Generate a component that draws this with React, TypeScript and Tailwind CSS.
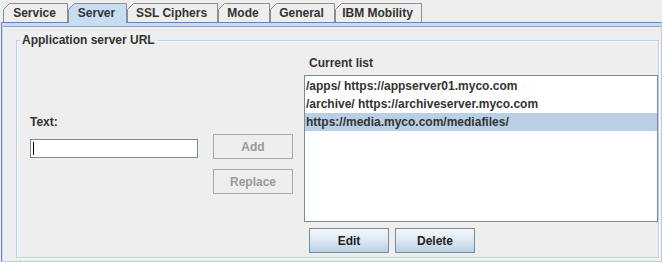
import React from "react";

type Tab = { label: string; w: number };

const TABS: Tab[] = [
  { label: "Service", w: 65 },
  { label: "Server", w: 59 },
  { label: "SSL Ciphers", w: 91 },
  { label: "Mode", w: 52 },
  { label: "General", w: 65 },
  { label: "IBM Mobility", w: 87 },
];

const SELECTED = "Server";

const ROWS = [
  { text: "/apps/ https://appserver01.myco.com", selected: false },
  { text: "/archive/ https://archiveserver.myco.com", selected: false },
  { text: "https://media.myco.com/mediafiles/", selected: true },
];

/** Metal-style tab with the clipped top-left corner. */
function TabItem({ tab }: { tab: Tab }) {
  const sel = tab.label === SELECTED;
  const h = sel ? 20 : 19;
  const w = tab.w;
  return (
    <div
      className={
        "relative flex flex-none items-start justify-center pr-[2px] pt-[3px] " +
        (sel ? "z-10 -mb-px h-[20px]" : "h-[19px]")
      }
      style={{ width: w }}
    >
      <svg className="absolute inset-0" width={w} height={h}>
        <path
          d={`M0 ${h} V6.5 L6.5 0 H${w} V${h} Z`}
          fill={sel ? "#c8ddf2" : "#eeeeee"}
        />
        <path
          d={`M0.5 ${h} V6.5 L6.5 0.5 H${w - 0.5} V${h}`}
          fill="none"
          stroke="#8a8f96"
        />
      </svg>
      <span className="relative leading-[14px]">{tab.label}</span>
    </div>
  );
}

function DisabledButton({ label }: { label: string }) {
  return (
    <div className="flex h-[25px] w-[80px] items-center justify-center border border-[#a8a8a8] bg-[#eeeeee] text-[#9a9a9a]">
      {label}
    </div>
  );
}

function OceanButton({ label }: { label: string }) {
  return (
    <div className="flex h-[25px] w-[80px] items-center justify-center border border-[#7a8a99] bg-gradient-to-b from-[#f6f9fc] via-[#dde8f3] to-[#b8cfe5] text-[#222]">
      {label}
    </div>
  );
}

export default function App() {
  return (
    <div className="h-[262px] w-[662px] overflow-hidden bg-[#eeeeee] font-['Liberation_Sans',Arial,sans-serif] text-[12px] font-bold text-[#333333]">
      {/* tab strip */}
      <div className="flex h-[22px] items-end pl-[3px]">
        {TABS.map((t) => (
          <TabItem key={t.label} tab={t} />
        ))}
      </div>

      {/* content area */}
      <div className="ml-px h-[240px] border-b border-l border-r border-t border-b-[#b8cfe5] border-l-[#6382bf] border-r-[#b8cfe5] border-t-[#6382bf]">
        <div className="h-full border-l border-t-[3px] border-[#c8ddf2]">
          <div className="h-full border-t border-[#8da2c9] pl-[13px] pt-[6px]">
            <fieldset className="h-[225px] w-[643px] border border-[#b8cfe5] shadow-[inset_1px_1px_0_#ffffff,1px_1px_0_#ffffff]">
              <legend className="ml-[3px] bg-[#eeeeee] px-[2px] leading-[14px]">
                Application server URL
              </legend>

              <div className="flex">
                {/* left column */}
                <div className="w-[287px] pl-[13px] pt-[68px]">
                  <div className="leading-[14px]">Text:</div>
                  <div className="mt-[5px] flex items-start">
                    <div className="mt-[5px] h-[19px] w-[168px] border border-[#7a8a99] bg-white pl-[2px] pt-[2px]">
                      <div className="h-[13px] w-px bg-black" />
                    </div>
                    <div className="ml-[15px] flex flex-col gap-[10px]">
                      <DisabledButton label="Add" />
                      <DisabledButton label="Replace" />
                    </div>
                  </div>
                </div>

                {/* right column */}
                <div className="w-[354px] pt-[9px]">
                  <div className="pl-[5px] leading-[14px]">Current list</div>
                  <div className="mt-[5px] h-[147px] border border-[#7a8a99] bg-white pt-px">
                    {ROWS.map((r) => (
                      <div
                        key={r.text}
                        className={
                          "h-[18px] whitespace-nowrap pl-px leading-[18px] " +
                          (r.selected ? "bg-[#b8cfe5]" : "")
                        }
                      >
                        {r.text}
                      </div>
                    ))}
                  </div>
                  <div className="mt-[6px] flex gap-[6px] pl-[5px]">
                    <OceanButton label="Edit" />
                    <OceanButton label="Delete" />
                  </div>
                </div>
              </div>
            </fieldset>
          </div>
        </div>
      </div>
    </div>
  );
}
